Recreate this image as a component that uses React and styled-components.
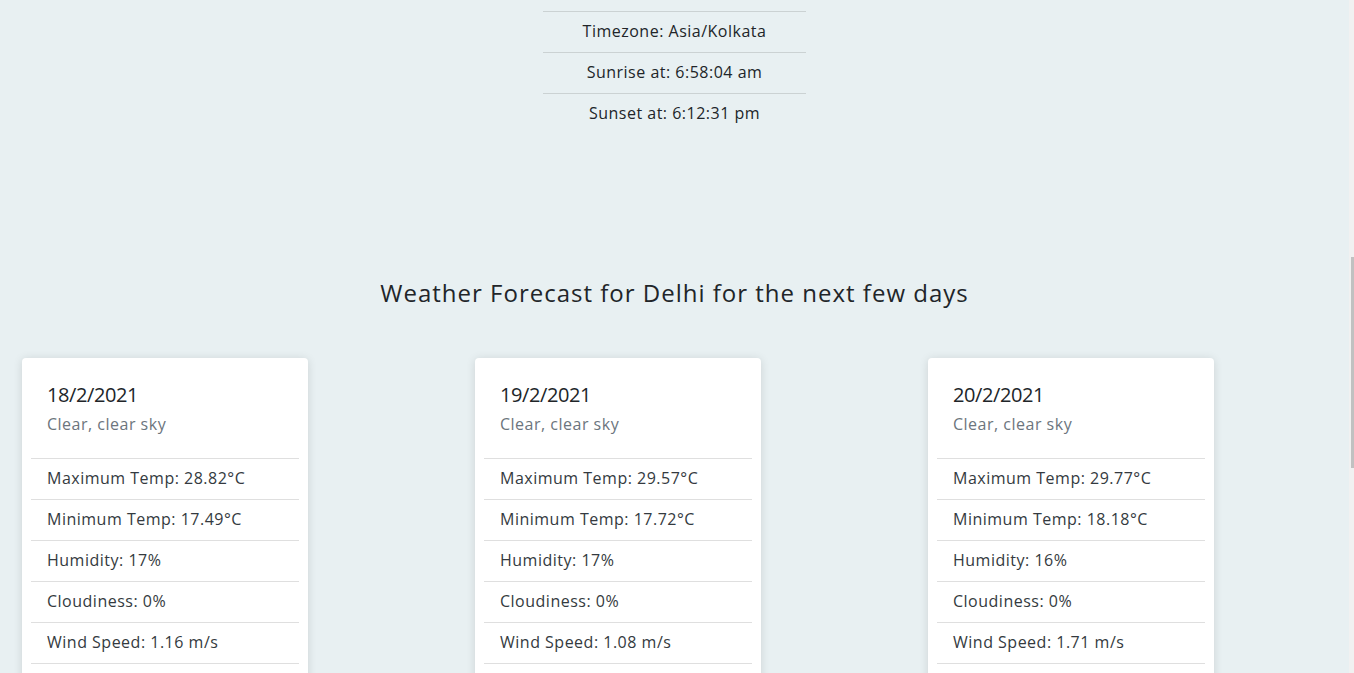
import React from "react";
import styled, { createGlobalStyle } from "styled-components";

const GlobalStyle = createGlobalStyle`
  html, body {
    margin: 0;
    padding: 0;
    overflow: hidden;
    background: #e8f0f2;
  }
  body {
    font-family: "Open Sans", "Liberation Sans", sans-serif;
    color: #212529;
  }
`;

const Page = styled.div`
  width: 1349px;
  min-height: 673px;
`;

const InfoList = styled.ul`
  list-style: none;
  margin: 11px auto 0;
  padding: 0;
  width: 263px;
`;

const InfoItem = styled.li`
  border-top: 1px solid rgba(0, 0, 0, 0.125);
  padding: 7px 0 9px;
  line-height: 24px;
  font-size: 16px;
  letter-spacing: 0.5px;
  text-align: center;
  color: #212529;
`;

const Heading = styled.h2`
  margin: 144px 0 0;
  font-size: 24px;
  font-weight: 400;
  line-height: 29px;
  letter-spacing: 1px;
  text-align: center;
  color: #212529;
`;

const CardGrid = styled.div`
  display: grid;
  grid-template-columns: repeat(3, 286px);
  column-gap: 167px;
  padding-left: 22px;
  margin-top: 51px;
`;

const Card = styled.div`
  background: #fff;
  border-radius: 4px;
  box-shadow: 0 1px 10px rgba(0, 0, 0, 0.12);
  padding: 0 9px 24px;
`;

const CardBody = styled.div`
  padding: 25px 16px 22px;
`;

const CardTitle = styled.h5`
  margin: 0 0 5px;
  font-size: 20px;
  font-weight: 400;
  line-height: 24px;
  letter-spacing: -0.4px;
  color: #212529;
`;

const CardSubtitle = styled.div`
  font-size: 16px;
  line-height: 24px;
  letter-spacing: 0.5px;
  color: #6c757d;
`;

const StatList = styled.ul`
  list-style: none;
  margin: 0;
  padding: 0;
`;

const StatItem = styled.li`
  border-top: 1px solid rgba(0, 0, 0, 0.125);
  padding: 7px 16px 9px;
  line-height: 24px;
  font-size: 16px;
  letter-spacing: 0.5px;
  color: #343a40;
  &:last-child {
    border-bottom: 1px solid rgba(0, 0, 0, 0.125);
  }
`;

const ScrollTrack = styled.div`
  position: fixed;
  top: 0;
  right: 0;
  width: 5px;
  height: 100vh;
  background: #f1f1f1;
`;

const ScrollThumb = styled.div`
  position: absolute;
  left: 2px;
  right: 0;
  top: 257px;
  height: 211px;
  background: #c1c1c1;
`;

const forecast = [
  { date: "18/2/2021", desc: "Clear, clear sky", max: "28.82", min: "17.49", hum: "17", cloud: "0", wind: "1.16" },
  { date: "19/2/2021", desc: "Clear, clear sky", max: "29.57", min: "17.72", hum: "17", cloud: "0", wind: "1.08" },
  { date: "20/2/2021", desc: "Clear, clear sky", max: "29.77", min: "18.18", hum: "16", cloud: "0", wind: "1.71" },
];

export default function App() {
  return (
    <>
      <GlobalStyle />
      <Page>
        <InfoList>
          <InfoItem>Timezone: Asia/Kolkata</InfoItem>
          <InfoItem>Sunrise at: 6:58:04 am</InfoItem>
          <InfoItem>Sunset at: 6:12:31 pm</InfoItem>
        </InfoList>
        <Heading>Weather Forecast for Delhi for the next few days</Heading>
        <CardGrid>
          {forecast.map((f) => (
            <Card key={f.date}>
              <CardBody>
                <CardTitle>{f.date}</CardTitle>
                <CardSubtitle>{f.desc}</CardSubtitle>
              </CardBody>
              <StatList>
                <StatItem>Maximum Temp: {f.max}°C</StatItem>
                <StatItem>Minimum Temp: {f.min}°C</StatItem>
                <StatItem>Humidity: {f.hum}%</StatItem>
                <StatItem>Cloudiness: {f.cloud}%</StatItem>
                <StatItem>Wind Speed: {f.wind} m/s</StatItem>
              </StatList>
            </Card>
          ))}
        </CardGrid>
      </Page>
      <ScrollTrack>
        <ScrollThumb />
      </ScrollTrack>
    </>
  );
}
